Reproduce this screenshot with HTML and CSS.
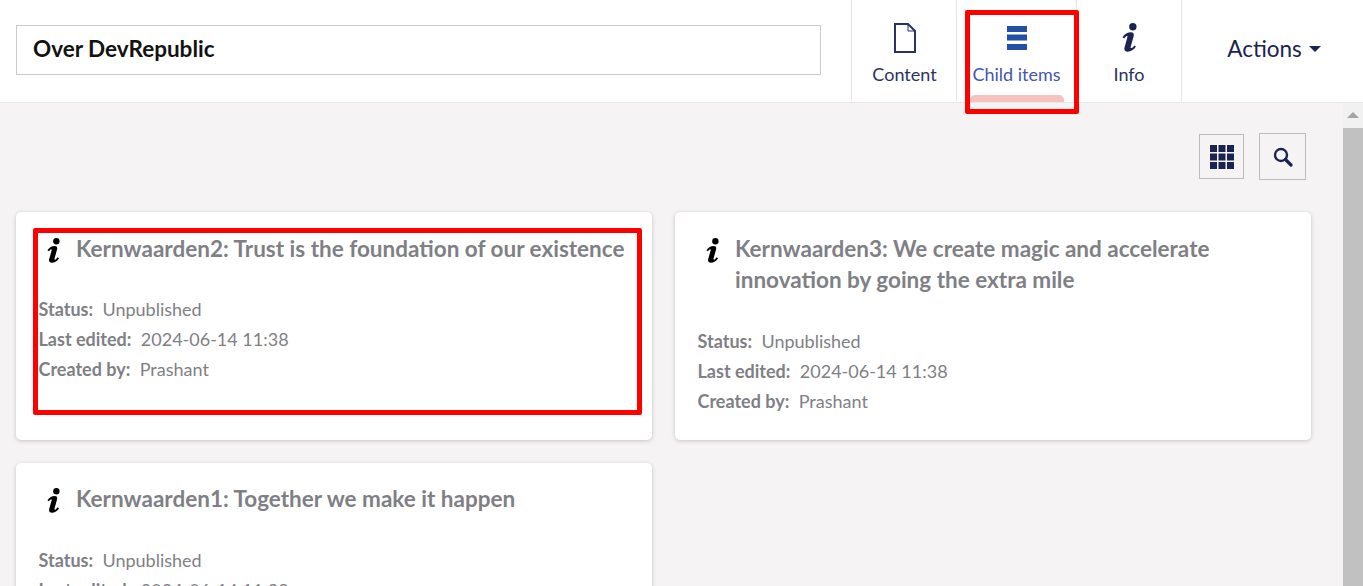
FILE: index.html
```html
<!DOCTYPE html>
<html lang="en">
<head>
<meta charset="utf-8">
<title>Over DevRepublic</title>
<link rel="stylesheet" href="styles.css">
</head>
<body>
<svg class="defs" width="0" height="0">
  <symbol id="info" viewBox="0.5 0.4 14.5 28.2">
    <circle cx="11" cy="4" r="3.6"/>
    <path d="M.9 14.2C3 11 6 9.400 9 9.400c2.400 0 3.400 1.500 2.800 3.800L8.900 23.600c-.3 1.100.4 1.500 1.200 1 .9-.5 1.600-1.400 2.300-2.400l1.600 1.100c-2 3.200-4.900 5-8 5-2.600 0-3.800-1.600-3.100-4.100l2.800-9.900c.3-1.100-.4-1.500-1.200-1-.8.5-1.300 1.200-1.900 2.100z"/>
  </symbol>
</svg>
<div class="app">
  <header class="topbar">
    <div class="title-wrap"><div class="title-input">Over DevRepublic</div></div>
    <nav class="tabs">
      <a class="tab tab-content">
        <svg class="tab-icon" width="24" height="32" viewBox="0 0 24 32"><path d="M2 2h13l7 7v21H2z" fill="none" stroke="currentColor" stroke-width="2"/><path d="M15 2v7h7" fill="none" stroke="currentColor" stroke-width="1"/></svg>
        <span>Content</span>
      </a>
      <a class="tab tab-child active">
        <svg class="tab-icon" width="24" height="32" viewBox="0 0 24 32"><path d="M2 4h20v6H2zM2 12.500h20v6H2zM2 22h20v6H2z" fill="currentColor"/></svg>
        <span>Child items</span>
        <i class="tab-marker"></i>
      </a>
      <a class="tab tab-info">
        <svg class="tab-icon tab-icon-info" width="15" height="29"><use href="#info"/></svg>
        <span>Info</span>
      </a>
    </nav>
    <div class="actions">Actions<i class="caret"></i></div>
  </header>
  <div class="body">
    <main class="content">
      <div class="tools">
        <button class="tool tool-grid"><svg width="24" height="24" viewBox="0 0 24 24"><path d="M0 0h7v7H0zM8.500 0h7v7h-7zM17 0h7v7h-7zM0 8.500h7v7H0zM8.500 8.500h7v7h-7zM17 8.500h7v7h-7zM0 17h7v7H0zM8.500 17h7v7h-7zM17 17h7v7h-7z"/></svg></button>
        <button class="tool tool-search"><svg width="20" height="20" viewBox="0 0 20 20"><circle cx="8" cy="8" r="6" fill="none" stroke="currentColor" stroke-width="2.400"/><path d="M12.500 12.500l5.500 5.500" stroke="currentColor" stroke-width="3.200" stroke-linecap="round"/></svg></button>
      </div>
      <div class="cards">
        <article class="card">
          <h2 class="card-title"><svg class="card-icon" width="13" height="25"><use href="#info"/></svg><span>Kernwaarden2: Trust is the foundation of our existence</span></h2>
          <p class="meta"><b>Status:</b> Unpublished</p>
          <p class="meta"><b>Last edited:</b> 2024-06-14 11:38</p>
          <p class="meta"><b>Created by:</b> Prashant</p>
        </article>
        <article class="card">
          <h2 class="card-title"><svg class="card-icon" width="13" height="25"><use href="#info"/></svg><span>Kernwaarden3: We create magic and accelerate innovation by going the extra mile</span></h2>
          <p class="meta"><b>Status:</b> Unpublished</p>
          <p class="meta"><b>Last edited:</b> 2024-06-14 11:38</p>
          <p class="meta"><b>Created by:</b> Prashant</p>
        </article>
        <article class="card">
          <h2 class="card-title"><svg class="card-icon" width="13" height="25"><use href="#info"/></svg><span>Kernwaarden1: Together we make it happen</span></h2>
          <p class="meta"><b>Status:</b> Unpublished</p>
          <p class="meta"><b>Last edited:</b> 2024-06-14 11:38</p>
          <p class="meta"><b>Created by:</b> Prashant</p>
        </article>
      </div>
    </main>
    <div class="scrollbar"><i class="scroll-up"></i><div class="scroll-thumb"></div></div>
  </div>
  <div class="mark mark-tab"></div>
  <div class="mark mark-card"></div>
</div>
</body>
</html>
```
FILE: styles.css
```css
* { box-sizing: border-box; }
html, body { margin: 0; height: 100%; overflow: hidden; }
body { font-family: Lato, "Liberation Sans", sans-serif; color: #1b2450; background: #f5f3f4; }
.defs { position: absolute; }
.app { position: relative; height: 586px; display: flex; flex-direction: column; overflow: hidden; }

.topbar { height: 103px; flex: none; display: flex; background: #fff; border-bottom: 1px solid #e8e6e7; }
.title-wrap { width: 851px; padding: 25px 30px 0 16px; }
.title-input { height: 50px; border: 1px solid #ccc9ca; padding: 0 16px; font-size: 22.5px; line-height: 46px; font-weight: 700; color: #121212; }
.tabs { display: flex; width: 331px; border-left: 1px solid #e8e6e7; }
.tab { position: relative; display: flex; flex-direction: column; align-items: center; border-right: 1px solid #e8e6e7; padding-top: 22px; font-size: 18px; line-height: 22px; color: #2a3360; }
.tab-content { width: 105px; padding-left: 1px; }
.tab-child { width: 120px; color: #4456ad; }
.tab-child .tab-icon { color: #2150a6; }
.tab-info { width: 105px; }
.tab-icon { display: block; height: 32px; margin-bottom: 9px; fill: currentColor; }
.tab-icon-info { height: 29px; margin-top: 1px; margin-bottom: 11px; color: #1b2450; }
.tab-marker { position: absolute; left: 13px; top: 95px; width: 94px; height: 7px; background: #f6c2bf; border-radius: 5px 5px 0 0; }
.actions { flex: 1; display: flex; align-items: center; justify-content: center; font-size: 22.5px; color: #1b2450; padding: 0 0 5px 3px; }
.caret { width: 0; height: 0; margin-left: 7px; border: 6px solid transparent; border-top-color: #1b2450; border-bottom: 0; }

.body { flex: 1; display: flex; min-height: 0; overflow: hidden; }
.content { flex: 1; padding: 30px 32px 0 16px; min-width: 0; }
.tools { display: flex; justify-content: flex-end; align-items: center; gap: 15px; height: 47px; margin-bottom: 32px; padding-right: 5px; }
.tool { display: flex; align-items: center; justify-content: center; background: transparent; border: 1px solid #bdbbbc; padding: 0; color: #1b2450; fill: #1b2450; }
.tool-grid { width: 45px; height: 45px; }
.tool-search { width: 47px; height: 47px; }

.cards { display: grid; grid-template-columns: 636px 636px; column-gap: 23px; row-gap: 22.5px; align-items: start; }
.card { height: 228px; background: #fff; border-radius: 5px; box-shadow: 0 1px 4px rgba(0,0,0,.2); padding: 20.75px 22.5px 0; color: #7f7f86; font-size: 18px; }
.card:nth-child(3) { height: 300px; }
.card-title { display: flex; margin: 0 0 30px; font-size: 22.5px; line-height: 31.5px; font-weight: 700; color: #7f7f86; }
.card-icon { flex: none; fill: #000; margin: 5px 16.5px 0 8px; }
.meta { margin: 0; height: 30px; line-height: 30px; white-space: pre-wrap; }
.meta b { font-weight: 700; margin-right: 4.75px; }

.scrollbar { position: relative; flex: none; width: 20px; background: #f1f1f1; }
.scroll-up { display: block; width: 0; height: 0; margin: 9px auto 0; border: 6px solid transparent; border-bottom: 6px solid #a3a3a3; border-top: 0; }
.scroll-thumb { position: absolute; left: 0; top: 25px; bottom: 0; width: 100%; background: #c1c1c1; }

.mark { position: absolute; border: 5px solid #f00; border-radius: 2px; }
.mark-tab { left: 965px; top: 10px; width: 114px; height: 104px; }
.mark-card { left: 33px; top: 228px; width: 609px; height: 187px; }
```
